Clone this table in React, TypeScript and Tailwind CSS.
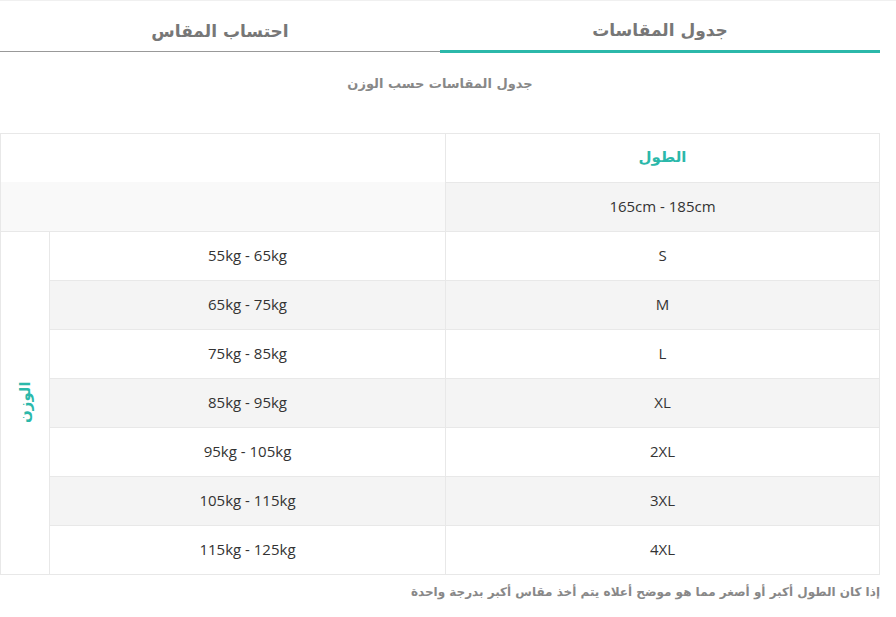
import React from 'react';

const rows = [
    { size: 'S', weight: '55kg - 65kg' },
    { size: 'M', weight: '65kg - 75kg' },
    { size: 'L', weight: '75kg - 85kg' },
    { size: 'XL', weight: '85kg - 95kg' },
    { size: '2XL', weight: '95kg - 105kg' },
    { size: '3XL', weight: '105kg - 115kg' },
    { size: '4XL', weight: '115kg - 125kg' },
];

const arabic = "font-['DejaVu_Sans',sans-serif]";
const latin = "font-['Open_Sans','Liberation_Sans',sans-serif] text-[15px] text-[#333]";
const cell = 'h-[49px] border border-[#e8e8e8] text-center align-middle p-0';

function App() {
    const [tab, setTab] = React.useState<'chart' | 'calc'>('chart');

    const tabClass = (active: boolean) =>
        `w-[440px] pt-[11px] text-[17px] font-bold text-[#777] ${arabic} ${
            active ? 'h-[52px] border-b-[3px] border-[#2bb8aa]' : 'h-[51px] border-b border-[#999]'
        }`;

    return (
        <div dir="rtl" className="min-h-[617px] w-full bg-white border-t border-[#f0f0f0]">
            <div className="w-[880px] mr-auto">
                <div className="flex items-start">
                    <button onClick={() => setTab('chart')} className={tabClass(tab === 'chart')}>
                        جدول المقاسات
                    </button>
                    <button onClick={() => setTab('calc')} className={tabClass(tab === 'calc')}>
                        احتساب المقاس
                    </button>
                </div>

                <p className={`mt-[21px] text-center text-[13px] font-bold text-[#888] ${arabic}`}>جدول المقاسات حسب الوزن</p>

                <table className="mt-[39px] w-[879px] border-collapse table-fixed">
                    <colgroup>
                        <col className="w-[434px]" />
                        <col className="w-[396px]" />
                        <col className="w-[49px]" />
                    </colgroup>
                    <tbody>
                        <tr>
                            <td className={`${cell} bg-white text-[15px] font-bold text-[#2bb8aa] ${arabic}`}>الطول</td>
                            <td colSpan={2} className={`${cell} bg-white border-b-0`} />
                        </tr>
                        <tr>
                            <td className={`${cell} bg-[#f4f4f4] ${latin}`}>165cm - 185cm</td>
                            <td colSpan={2} className={`${cell} bg-[#f9f9f9] border-t-0`} />
                        </tr>
                        {rows.map((r, i) => (
                            <tr key={r.size} className={i % 2 === 1 ? 'bg-[#f4f4f4]' : 'bg-white'}>
                                <td className={`${cell} ${latin}`}>{r.size}</td>
                                <td className={`${cell} ${latin}`}>{r.weight}</td>
                                {i === 0 && (
                                    <td rowSpan={rows.length} className={`${cell} bg-white`}>
                                        <div className="flex items-center justify-center">
                                            <span
                                                className={`inline-block -rotate-90 whitespace-nowrap text-[15px] font-bold text-[#2bb8aa] ${arabic}`}
                                            >
                                                الوزن
                                            </span>
                                        </div>
                                    </td>
                                )}
                            </tr>
                        ))}
                    </tbody>
                </table>

                <p className={`mt-[8px] text-[12px] font-bold text-[#888] ${arabic}`}>
                    إذا كان الطول أكبر أو أصغر مما هو موضح أعلاه يتم أخذ مقاس أكبر بدرجة واحدة
                </p>
            </div>
        </div>
    );
}

export default App;
